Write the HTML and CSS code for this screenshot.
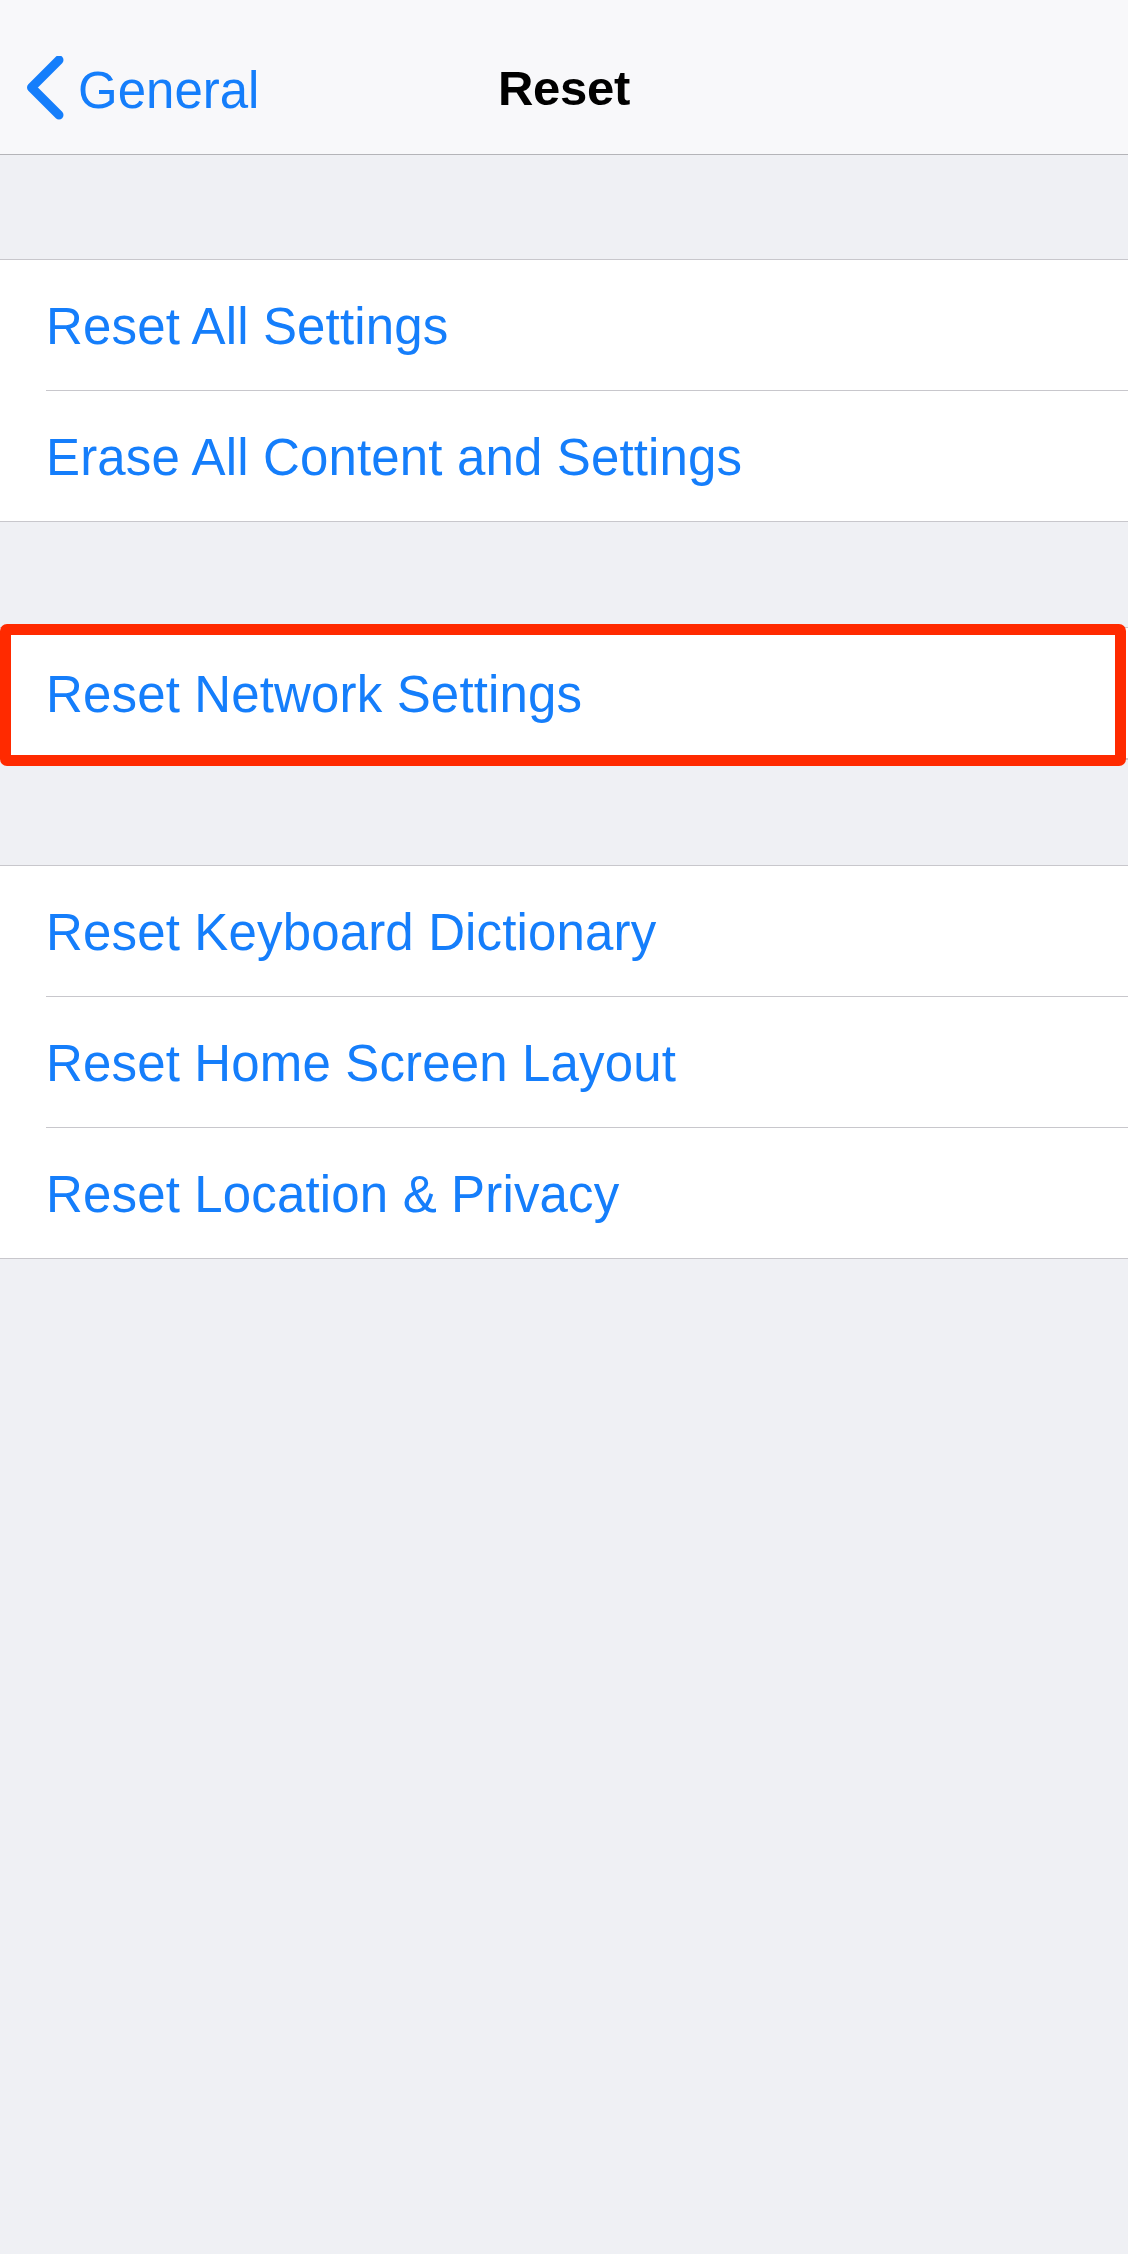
FILE: index.html
```html
<!DOCTYPE html>
<html lang="en">
<head>
<meta charset="utf-8">
<title>Reset</title>
<link rel="stylesheet" href="styles.css">
</head>
<body>
<div class="screen">
  <header class="navbar">
    <div class="back">
      <svg class="chevron" width="40" height="70" viewBox="0 0 40 70" aria-hidden="true">
        <path d="M32 4 L4.5 31.5 L32 59" fill="none" stroke="#157efb" stroke-width="9" stroke-linecap="round" stroke-linejoin="round"/>
      </svg>
      <span class="back-label">General</span>
    </div>
    <h1 class="title">Reset</h1>
    <div class="spacer"></div>
  </header>

  <section class="group">
    <div class="cell"><span class="label">Reset All Settings</span></div>
    <div class="cell"><span class="label">Erase All Content and Settings</span></div>
  </section>

  <section class="group highlighted">
    <div class="cell"><span class="label">Reset Network Settings</span></div>
    <div class="highlight-box"></div>
  </section>

  <section class="group">
    <div class="cell"><span class="label">Reset Keyboard Dictionary</span></div>
    <div class="cell"><span class="label">Reset Home Screen Layout</span></div>
    <div class="cell"><span class="label">Reset Location &amp; Privacy</span></div>
  </section>
</div>
</body>
</html>
```

FILE: styles.css
```css
* { box-sizing: border-box; }

html, body {
  margin: 0;
  padding: 0;
  background: #eff0f4;
}

body {
  font-family: "Liberation Sans", Arial, sans-serif;
  width: 1128px;
  min-height: 2254px;
}

.screen {
  display: flex;
  flex-direction: column;
  min-height: 2254px;
  background: #eff0f4;
}

.navbar {
  height: 155px;
  padding-top: 24px;
  background: #f8f8fa;
  border-bottom: 1px solid #b4b4b8;
  display: grid;
  grid-template-columns: 1fr auto 1fr;
  align-items: center;
}

.back {
  display: flex;
  align-items: center;
  padding-left: 27px;
  color: #157efb;
}

.chevron {
  display: block;
  margin-top: 4px;
}

.back-label {
  font-size: 51px;
  line-height: 51px;
  margin-left: 11px;
  letter-spacing: 0;
  padding-top: 2px;
}

.title {
  margin: 0;
  font-size: 49px;
  line-height: 51px;
  font-weight: 700;
  color: #000;
  letter-spacing: -0.3px;
  margin-top: -1px;
}

.group {
  margin-top: 104px;
  background: #fff;
  border-top: 1px solid #c8c7cc;
  border-bottom: 1px solid #c8c7cc;
  padding-left: 46px;
}

.group + .group {
  margin-top: 105px;
}

.cell {
  height: 131px;
  display: flex;
  align-items: center;
  padding-top: 3px;
  border-bottom: 1px solid #c8c7cc;
}

.cell:last-of-type {
  height: 130px;
  border-bottom: none;
}

.label {
  font-size: 51px;
  line-height: 51px;
  color: #157efb;
  letter-spacing: 0.15px;
}

.highlighted {
  position: relative;
}

.highlight-box {
  position: absolute;
  top: -4px;
  left: 0;
  width: 1126px;
  height: 142px;
  border: 11px solid #ff2a00;
  border-radius: 7px;
}
```
